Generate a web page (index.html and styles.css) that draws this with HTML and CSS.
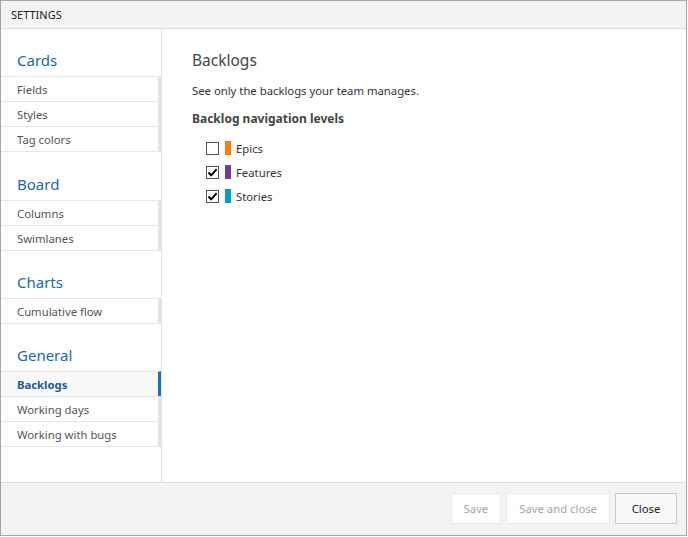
FILE: index.html
```html
<!DOCTYPE html>
<html>
<head>
<meta charset="utf-8">
<link rel="stylesheet" href="styles.css">
</head>
<body>
<div class="dialog">
  <div class="titlebar">SETTINGS</div>
  <div class="main">
    <nav class="nav">
      <div class="section">
        <div class="heading">Cards</div>
        <ul class="items">
          <li class="item">Fields</li>
          <li class="item">Styles</li>
          <li class="item">Tag colors</li>
        </ul>
      </div>
      <div class="section board">
        <div class="heading">Board</div>
        <ul class="items">
          <li class="item">Columns</li>
          <li class="item">Swimlanes</li>
        </ul>
      </div>
      <div class="section">
        <div class="heading">Charts</div>
        <ul class="items">
          <li class="item">Cumulative flow</li>
        </ul>
      </div>
      <div class="section">
        <div class="heading">General</div>
        <ul class="items">
          <li class="item selected">Backlogs</li>
          <li class="item">Working days</li>
          <li class="item">Working with bugs</li>
        </ul>
      </div>
    </nav>
    <div class="content">
      <h1 class="title">Backlogs</h1>
      <p class="desc">See only the backlogs your team manages.</p>
      <h2 class="subtitle">Backlog navigation levels</h2>
      <ul class="levels">
        <li class="level">
          <span class="box"></span>
          <span class="swatch epics"></span>
          <span class="label">Epics</span>
        </li>
        <li class="level">
          <span class="box checked"><svg viewBox="0 0 13 13" width="13" height="13"><path d="M2.5 6.5 L5.2 9.3 L10.6 3.2" fill="none" stroke="#000" stroke-width="2"/></svg></span>
          <span class="swatch features"></span>
          <span class="label">Features</span>
        </li>
        <li class="level">
          <span class="box checked"><svg viewBox="0 0 13 13" width="13" height="13"><path d="M2.5 6.5 L5.2 9.3 L10.6 3.2" fill="none" stroke="#000" stroke-width="2"/></svg></span>
          <span class="swatch stories"></span>
          <span class="label">Stories</span>
        </li>
      </ul>
    </div>
  </div>
  <div class="footer">
    <button class="btn disabled">Save</button>
    <button class="btn disabled">Save and close</button>
    <button class="btn close">Close</button>
  </div>
</div>
</body>
</html>
```
FILE: styles.css
```css
* { box-sizing: border-box; }
html, body { margin: 0; padding: 0; background: #fff; }
body {
  font-family: "Noto Sans", "Open Sans", sans-serif;
  font-size: 11.3px;
  color: #333;
}
.dialog {
  width: 687px;
  height: 536px;
  border: 1px solid #a6a6a6;
  display: flex;
  flex-direction: column;
  background: #fff;
}
.titlebar {
  height: 28px;
  background: #f3f3f3;
  border-bottom: 1px solid #dcdcdc;
  padding-left: 10px;
  line-height: 27px;
  font-size: 11px;
  color: #212121;
}
.main {
  flex: 1;
  display: flex;
  min-height: 0;
}
.nav {
  width: 161px;
  border-right: 1px solid #e3e3e3;
  display: flex;
  flex-direction: column;
}
.heading {
  padding: 21px 0 6px 16px;
  height: 47px;
  line-height: 20px;
  font-size: 15px;
  color: #1a68a8;
}
.section.board { margin-top: 1px; }
.items { list-style: none; margin: 0; padding: 0; }
.item {
  height: 25px;
  line-height: 25px;
  border-top: 1px solid #e6e6e6;
  border-right: 3px solid #e3e3e3;
  padding-left: 16px;
  color: #555;
}
.item:last-child { height: 26px; border-bottom: 1px solid #e6e6e6; }
.item.selected {
  background: #f8f8f8;
  border-right-color: #1d6fc6;
  color: #1a5c98;
  font-weight: bold;
}
.content {
  flex: 1;
  padding: 20px 30px;
}
.title {
  margin: 0;
  font-size: 15.5px;
  font-weight: normal;
  line-height: 22px;
  color: #444;
}
.desc {
  margin: 11px 0 0;
  line-height: 18px;
  color: #333;
}
.subtitle {
  margin: 10px 0 0;
  font-size: 12px;
  font-weight: bold;
  line-height: 18px;
  color: #444;
}
.levels {
  list-style: none;
  margin: 8px 0 0;
  padding: 0 0 0 14px;
}
.level {
  display: flex;
  align-items: center;
  height: 24px;
}
.box {
  width: 13px;
  height: 13px;
  border: 1px solid #555;
  background: #fff;
  display: flex;
  align-items: center;
  justify-content: center;
}
.box svg { display: block; margin: -1px; }
.swatch {
  width: 6px;
  height: 14px;
  margin-left: 6px;
}
.epics { background: #ff7b00; }
.features { background: #773b93; }
.stories { background: #009ccc; }
.label {
  margin-left: 5px;
  color: #333;
}
.footer {
  height: 53px;
  background: #f3f3f3;
  border-top: 1px solid #dcdcdc;
  display: flex;
  justify-content: flex-end;
  align-items: flex-start;
  padding: 10px 9px 0 0;
  gap: 5px;
}
.btn {
  height: 31px;
  padding: 0 12px;
  font-family: inherit;
  font-size: 11.3px;
  border: 1px solid #c8c8c8;
  background: #f8f8f8;
  color: #222;
}
.btn.close { min-width: 62px; }
.btn.disabled {
  background: #fff;
  border-color: #e8e8e8;
  color: #a6a6a6;
}
```
